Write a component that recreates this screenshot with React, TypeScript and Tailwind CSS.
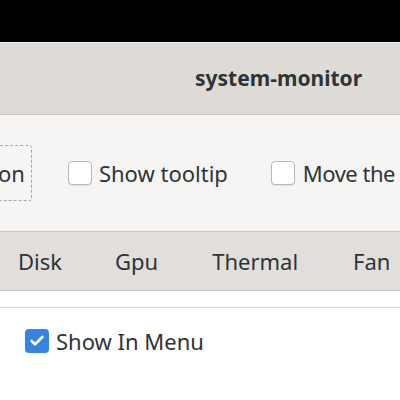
import { Check } from "lucide-react";

function Box({ checked = false }: { checked?: boolean }) {
  if (checked) {
    return (
      <span className="flex h-[24px] w-[24px] shrink-0 items-center justify-center rounded-[4px] bg-[#3584e4]">
        <Check className="h-[16px] w-[16px] text-white" strokeWidth={4} />
      </span>
    );
  }
  return (
    <span className="block h-[24px] w-[24px] shrink-0 rounded-[4px] border border-[#bdb7b2] bg-white shadow-[0_1px_0_rgba(0,0,0,0.08)]" />
  );
}

export default function App() {
  return (
    <div
      className="h-[400px] w-[400px] overflow-hidden bg-white text-[#2e3436]"
      style={{ fontFamily: '"Noto Sans", "Open Sans", sans-serif' }}
    >
      <div className="h-[42px] bg-black" />
      <div className="border-t border-[#f4f2f0] border-b border-b-[#c9c5c1] bg-[#dedbd7]">
        <div className="flex h-[71px] items-center pl-[195px] text-[21px] font-bold text-[#2e3436]">
          system-monitor
        </div>
      </div>
      <div className="flex h-[117px] items-center whitespace-nowrap border-b border-[#cdc7c2] bg-[#f6f5f4] text-[22px]">
        <div className="ml-[-13px] flex h-[56px] shrink-0 items-center rounded-[3px] border border-dashed border-[#a9a6a3] pl-[10px] pr-[6px]">
          on
        </div>
        <label className="ml-[36px] flex shrink-0 items-center gap-[7px]">
          <Box />
          <span>Show tooltip</span>
        </label>
        <label className="ml-[43px] flex shrink-0 items-center gap-[8px]">
          <Box />
          <span className="tracking-[-0.5px]">Move the</span>
        </label>
      </div>
      <div className="flex h-[59px] items-center whitespace-nowrap border-b border-[#cdc7c2] bg-[#e1dedb] text-[22px]">
        <span className="ml-[18px]">Disk</span>
        <span className="ml-[53px]">Gpu</span>
        <span className="ml-[54px]">Thermal</span>
        <span className="ml-[55px]">Fan</span>
      </div>
      <div className="h-[17px] border-b border-[#d5d0cc] bg-white" />
      <div className="flex items-center gap-[7px] pl-[25px] pt-[21px] text-[22px] leading-[24px]">
        <Box checked />
        <span>Show In Menu</span>
      </div>
    </div>
  );
}
